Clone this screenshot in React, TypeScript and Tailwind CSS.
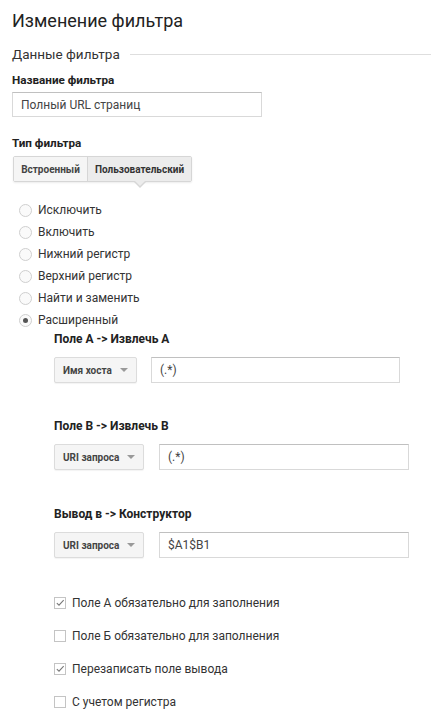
import { useState } from 'react';

const radioOptions = ['Исключить', 'Включить', 'Нижний регистр', 'Верхний регистр', 'Найти и заменить', 'Расширенный'];

const checkOptions = [
    { label: 'Поле A обязательно для заполнения', checked: true },
    { label: 'Поле Б обязательно для заполнения', checked: false },
    { label: 'Перезаписать поле вывода', checked: true },
    { label: 'С учетом регистра', checked: false },
];

function SelectButton({ label, width }: { label: string; width: string }) {
    return (
        <button
            type="button"
            className={`flex h-[26px] ${width} items-center justify-between rounded-[2px] border border-[#dcdcdc] bg-[#f5f5f5] pl-[8px] pr-[8px] text-[10px] font-bold text-[#444] shadow-[0_1px_1px_rgba(0,0,0,0.05)]`}
        >
            <span>{label}</span>
            <span className="h-0 w-0 border-x-[4px] border-t-[4px] border-x-transparent border-t-[#999]" />
        </button>
    );
}

function FieldRow({ title, select, selectWidth, inputWidth, value, gap }: { title: string; select: string; selectWidth: string; inputWidth: string; value: string; gap: string }) {
    return (
        <div>
            <p className="text-[12px] leading-[16px] font-bold text-[#222]">{title}</p>
            <div className={`mt-[10px] flex ${gap}`}>
                <SelectButton label={select} width={selectWidth} />
                <input
                    readOnly
                    value={value}
                    className={`h-[26px] ${inputWidth} border border-[#d9d9d9] border-t-[#c0c0c0] px-[8px] text-[12px] text-[#444] outline-none`}
                />
            </div>
        </div>
    );
}

export default function App() {
    const [selected, setSelected] = useState(5);

    return (
        <div className="min-h-screen bg-white pl-[12px] pt-[9px] text-[#333]" style={{ fontFamily: 'Roboto, "Noto Sans", sans-serif' }}>
            <h1 className="text-[18px] leading-[24px] text-[#222]">Изменение фильтра</h1>

            <div className="mt-[11px] flex items-center gap-[10px]">
                <h2 className="text-[13.5px] leading-[20px] text-[#333]">Данные фильтра</h2>
                <div className="h-px flex-1 bg-[#dedede]" />
            </div>

            <p className="mt-[8px] text-[11.7px] leading-[16px] font-bold text-[#222]">Название фильтра</p>
            <input
                readOnly
                value="Полный URL страниц"
                className="mt-[4px] h-[25px] w-[250px] border border-[#d9d9d9] border-t-[#c0c0c0] px-[8px] text-[12px] text-[#444] outline-none"
            />

            <p className="mt-[18px] text-[11.7px] leading-[16px] font-bold text-[#222]">Тип фильтра</p>
            <div className="relative mt-[5px] ml-px inline-flex h-[26px] rounded-[2px] border border-[#d6d6d6] shadow-[0_1px_2px_rgba(0,0,0,0.08)]">
                <button type="button" className="w-[73px] bg-[#f5f5f5] text-[10px] font-bold text-[#444]">
                    Встроенный
                </button>
                <button type="button" className="relative w-[104px] border-l border-[#d6d6d6] bg-[#ececec] text-[10px] font-bold text-[#333]">
                    Пользовательский
                    <span className="absolute left-1/2 top-full -ml-[6px] mt-px h-0 w-0 border-x-[6px] border-t-[6px] border-x-transparent border-t-[#d6d6d6]" />
                    <span className="absolute left-1/2 top-full -ml-[5px] h-0 w-0 border-x-[5px] border-t-[5px] border-x-transparent border-t-[#ececec]" />
                </button>
            </div>

            <div className="mt-[17px] flex flex-col">
                {radioOptions.map((label, i) => (
                    <label key={label} className="flex h-[22px] cursor-pointer items-center gap-[6px] pl-[7px] text-[12px] text-[#333]" onClick={() => setSelected(i)}>
                        <span className="flex h-[13px] w-[13px] items-center justify-center rounded-full border border-[#cfcfcf] bg-[#fafafa]">
                            {selected === i && <span className="h-[5px] w-[5px] rounded-full bg-[#555]" />}
                        </span>
                        {label}
                    </label>
                ))}
            </div>

            <div className="pl-[42px]">
                <FieldRow title="Поле A -> Извлечь A" select="Имя хоста" selectWidth="w-[83px]" inputWidth="w-[249px]" value="(.*)" gap="gap-[14px]" />
                <div className="mt-[35px]">
                    <FieldRow title="Поле B -> Извлечь B" select="URI запроса" selectWidth="w-[90px]" inputWidth="w-[250px]" value="(.*)" gap="gap-[15px]" />
                </div>
                <div className="mt-[36px]">
                    <FieldRow title="Вывод в -> Конструктор" select="URI запроса" selectWidth="w-[90px]" inputWidth="w-[250px]" value="$A1$B1" gap="gap-[15px]" />
                </div>

                <div className="mt-[35px] flex flex-col gap-[13px]">
                    {checkOptions.map((opt) => (
                        <label key={opt.label} className="flex h-[20px] items-center gap-[6px] text-[12px] text-[#333]">
                            <span className="flex h-[12px] w-[12px] items-center justify-center border border-[#c4c4c4] bg-white">
                                {opt.checked && (
                                    <svg viewBox="0 0 12 12" className="h-[12px] w-[12px]">
                                        <path d="M2.2 6.2 L4.8 8.6 L10.4 2.6" fill="none" stroke="#777" strokeWidth="1.3" />
                                    </svg>
                                )}
                            </span>
                            {opt.label}
                        </label>
                    ))}
                </div>
            </div>
        </div>
    );
}
